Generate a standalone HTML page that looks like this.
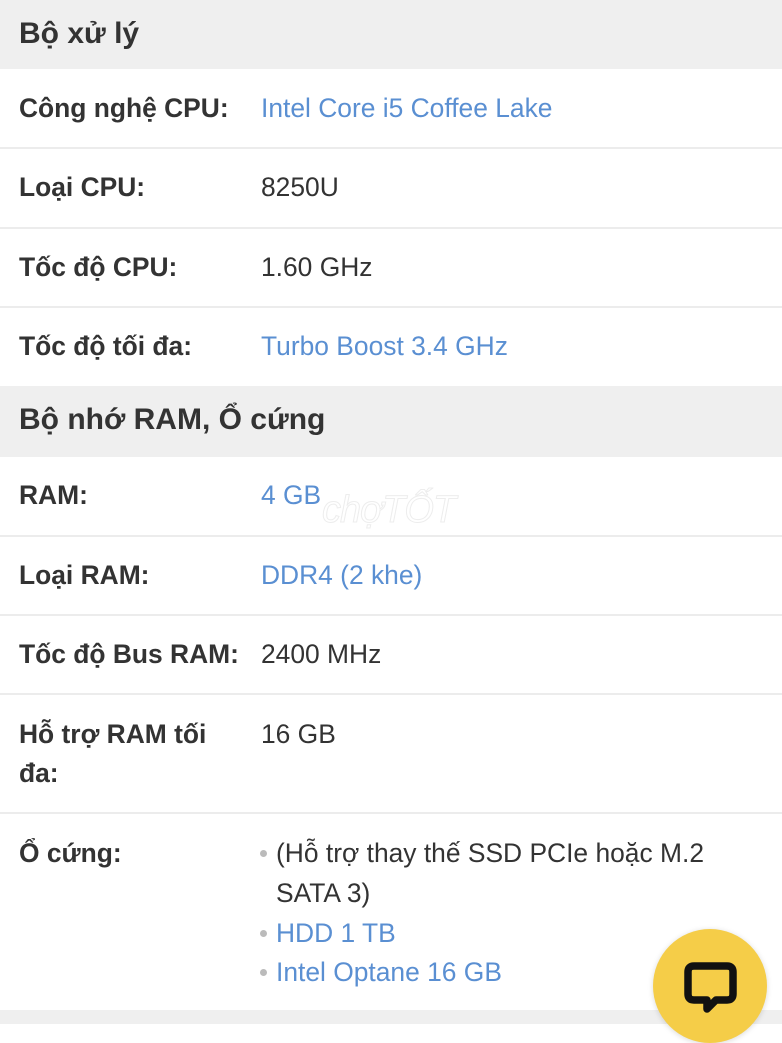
<!DOCTYPE html>
<html><head><meta charset="utf-8"><style>
html,body{margin:0;padding:0;width:782px;height:1024px;overflow:hidden;background:#fff;font-family:"Liberation Sans",Arial,sans-serif;}
.hd{position:absolute;left:0;width:782px;background:#efefef;}
.hd span{position:absolute;left:19px;font-weight:bold;font-size:30px;color:#333;line-height:40px;}
.t{position:absolute;font-size:26.4px;line-height:40px;color:#333;white-space:nowrap;}
.b{font-weight:bold;left:19px;}
.v{left:261px;}
.l{color:#5a8fd2;}
.sep{position:absolute;left:0;width:782px;height:2px;background:#ececec;}
.dot{position:absolute;left:260px;width:7px;height:7px;border-radius:50%;background:#bbb;}
</style></head><body>
<div class="hd" style="top:0;height:69px"><span style="top:14px">Bộ xử lý</span></div>
<div class="t b" style="top:88px">Công nghệ CPU:</div><div class="t v l" style="top:88px">Intel Core i5 Coffee Lake</div>
<div class="sep" style="top:147px"></div>
<div class="t b" style="top:167px">Loại CPU:</div><div class="t v" style="top:167px">8250U</div>
<div class="sep" style="top:227px"></div>
<div class="t b" style="top:247px">Tốc độ CPU:</div><div class="t v" style="top:247px">1.60 GHz</div>
<div class="sep" style="top:306px"></div>
<div class="t b" style="top:326px">Tốc độ tối đa:</div><div class="t v l" style="top:326px">Turbo Boost 3.4 GHz</div>
<div class="hd" style="top:386px;height:71px"><span style="top:14px">Bộ nhớ RAM, Ổ cứng</span></div>
<div class="t b" style="top:475px">RAM:</div><div class="t v l" style="top:475px">4 GB</div>
<div class="t" style="top:490px;left:322px;font-size:38px;font-style:italic;color:#fff;-webkit-text-stroke:1px #ededed;letter-spacing:-1px">chợTỐT</div>
<div class="sep" style="top:535px"></div>
<div class="t b" style="top:555px">Loại RAM:</div><div class="t v l" style="top:555px">DDR4 (2 khe)</div>
<div class="sep" style="top:614px"></div>
<div class="t b" style="top:634px">Tốc độ Bus RAM:</div><div class="t v" style="top:634px">2400 MHz</div>
<div class="sep" style="top:693px"></div>
<div class="t b" style="top:714px">Hỗ trợ RAM tối</div><div class="t b" style="top:753px">đa:</div><div class="t v" style="top:714px">16 GB</div>
<div class="sep" style="top:812px"></div>
<div class="t b" style="top:833px">Ổ cứng:</div>
<div class="dot" style="top:850px"></div><div class="t" style="left:276px;top:833px">(Hỗ trợ thay thế SSD PCIe hoặc M.2</div>
<div class="t" style="left:276px;top:873px">SATA 3)</div>
<div class="dot" style="top:930px"></div><div class="t l" style="left:276px;top:913px">HDD 1 TB</div>
<div class="dot" style="top:969px"></div><div class="t l" style="left:276px;top:952px">Intel Optane 16 GB</div>
<div style="position:absolute;left:0;top:1010px;width:782px;height:14px;background:#efefef"></div>
<div style="position:absolute;left:653px;top:929px;width:114px;height:114px;border-radius:50%;background:#f5cd48;box-shadow:0 1px 6px rgba(0,0,0,.15)"></div>
<svg style="position:absolute;left:680px;top:958px" width="62" height="62" viewBox="0 0 62 62"><path d="M14 8H47Q53 8 53 14V36Q53 42 47 42H36L27 51V42H14Q8 42 8 36V14Q8 8 14 8Z" fill="none" stroke="#111" stroke-width="7.5" stroke-linejoin="round"/></svg>
</body></html>
